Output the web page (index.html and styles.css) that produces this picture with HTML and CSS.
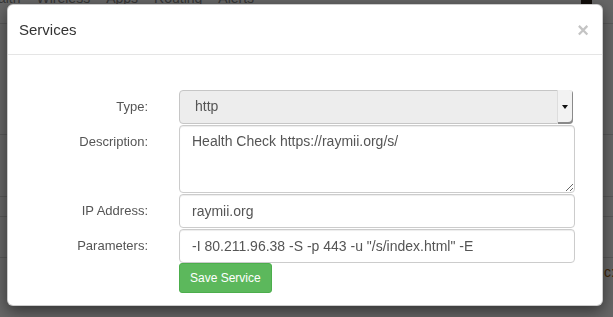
FILE: index.html
```html
<!DOCTYPE html>
<html lang="en">
<head>
    <meta charset="UTF-8">
    <title>Services</title>
    <link rel="stylesheet" href="styles.css">
</head>
<body>

<div class="page">
    <nav class="topnav">
        <span>Health</span>
        <span>Wireless</span>
        <span>Apps</span>
        <span>Routing</span>
        <span>Alerts</span>
        <span class="nav-dark"></span>
    </nav>
    <div class="bg-table">
        <div class="bg-row first"></div>
        <div class="bg-row mid"></div>
        <div class="bg-row small"></div>
        <div class="bg-row mid2"></div>
        <div class="bg-row last"><span class="bg-time">c:0</span></div>
    </div>
</div>

<div class="backdrop"></div>

<div class="modal">
    <div class="modal-header">
        <h4 class="modal-title">Services</h4>
        <span class="close">&times;</span>
    </div>
    <form class="modal-body">
        <label class="field-label">Type:</label>
        <div class="select">
            <span class="select-value">http</span>
            <span class="select-btn"><span class="caret"></span></span>
        </div>

        <label class="field-label">Description:</label>
        <textarea class="control textarea">Health Check https://raymii.org/s/</textarea>

        <label class="field-label">IP Address:</label>
        <input type="text" class="control" value="raymii.org">

        <label class="field-label">Parameters:</label>
        <input type="text" class="control" value="-I 80.211.96.38 -S -p 443 -u &quot;/s/index.html&quot; -E">

        <span></span>
        <div class="actions">
            <button type="button" class="btn-save">Save Service</button>
        </div>
    </form>
</div>

</body>
</html>
```

FILE: styles.css
```css
* {
    box-sizing: border-box;
}

body {
    margin: 0;
    height: 317px;
    overflow: hidden;
    background: #fff;
    font-family: 'Liberation Sans', Arial, sans-serif;
    color: #555;
}

/* page behind the modal */
.topnav {
    display: flex;
    gap: 16px;
    margin: -12px 0 0 -20px;
    height: 36px;
    font-size: 14px;
    line-height: 20px;
    color: #888;
    border-bottom: 1px solid #ddd;
}

.nav-dark {
    width: 11px;
    height: 16px;
    margin-left: auto;
    margin-right: 21px;
    background: #2a2018;
}

.bg-row {
    border-bottom: 1px solid #ddd;
}

.bg-row.first {
    height: 111px;
}

.bg-row.mid {
    height: 62px;
}

.bg-row.small {
    height: 20px;
}

.bg-row.mid2 {
    height: 41px;
}

.bg-row.last {
    height: 40px;
    padding: 6px 0 0 604px;
    border-bottom: none;
    font-size: 14px;
    color: #a06010;
    white-space: nowrap;
}

.backdrop {
    position: fixed;
    inset: 0;
    background: rgba(0, 0, 0, 0.6);
}

/* modal */
.modal {
    position: fixed;
    top: 4px;
    left: 7px;
    width: 596px;
    background: #fff;
    border: 1px solid rgba(0, 0, 0, 0.2);
    border-radius: 6px;
    box-shadow: 0 5px 15px rgba(0, 0, 0, 0.5);
}

.modal-header {
    display: flex;
    justify-content: space-between;
    align-items: center;
    height: 50px;
    padding: 0 13px 0 11px;
    border-bottom: 1px solid #e5e5e5;
}

.modal-title {
    margin: 0;
    font-size: 15px;
    font-weight: normal;
    line-height: 25px;
    color: #333;
}

.close {
    font-size: 20px;
    font-weight: bold;
    line-height: 1;
    color: #c4c4c4;
    cursor: pointer;
}

.modal-body {
    display: grid;
    grid-template-columns: 140px 396px;
    column-gap: 31px;
    row-gap: 1px;
    padding: 35px 0 12px 0;
}

.field-label {
    text-align: right;
    font-size: 13px;
    line-height: 33px;
    color: #555;
}

.control {
    display: block;
    width: 396px;
    height: 34px;
    margin: 0;
    padding: 4px 12px;
    border: 1px solid #ccc;
    border-radius: 4px;
    font-family: inherit;
    font-size: 14px;
    color: #555;
    background: #fff;
    box-shadow: inset 0 1px 1px rgba(0, 0, 0, 0.075);
}

.textarea {
    height: 68px;
    padding-top: 5px;
    line-height: 20px;
    resize: vertical;
}

.select {
    display: flex;
    width: 394px;
    height: 34px;
    border: 1px solid #c6c6c6;
    border-radius: 4px;
    background: #ededed;
    font-size: 14px;
    color: #555;
}

.select-value {
    flex: 1;
    padding-left: 15px;
    line-height: 31px;
}

.select-btn {
    display: flex;
    justify-content: center;
    align-items: center;
    width: 16px;
    margin: -1px -1px -1px 0;
    border-left: 1px solid #ddd;
    border-radius: 0 4px 4px 0;
    background: #f2f2f2;
    box-shadow: inset -1px -2px 0 #8a8a8a;
}

.caret {
    width: 0;
    height: 0;
    margin: 0 1px 1px 0;
    border-left: 3px solid transparent;
    border-right: 3px solid transparent;
    border-top: 4px solid #111;
}

.actions {
    display: flex;
    margin-top: -1px;
}

.btn-save {
    height: 30px;
    padding: 0 10px;
    border: 1px solid #4cae4c;
    border-radius: 3px;
    background: #5cb85c;
    color: #fff;
    font-family: inherit;
    font-size: 12px;
    cursor: pointer;
}
```
